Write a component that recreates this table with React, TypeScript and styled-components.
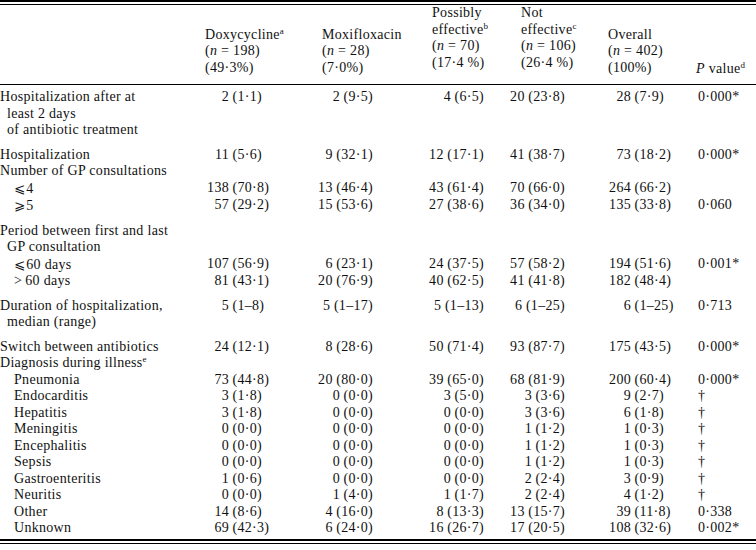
import React from 'react';
import styled, { createGlobalStyle } from 'styled-components';

const GlobalStyle = createGlobalStyle`
  body {
    margin: 0;
    background: #ffffff;
  }
`;

const COLS = '205px 117px 110px 89px 87px 88px 1fr';

type Align = { mode: 'paren' | 'right'; size: number };

// how each value column lines its figures up
const ALIGN: Align[] = [
  { mode: 'paren', size: 24 },
  { mode: 'right', size: 59 },
  { mode: 'right', size: 37 },
  { mode: 'right', size: 43 },
  { mode: 'paren', size: 23 },
];

const Table = styled.div`
  width: 756px;
  font-family: 'Liberation Serif', 'Times New Roman', serif;
  font-size: 14px;
  letter-spacing: 0.3px;
  color: #111;
`;

const Rule = styled.div<{ $h: number; $top?: number }>`
  height: ${({ $h }) => $h}px;
  margin-top: ${({ $top }) => $top ?? 0}px;
  background: #000;
`;

const HeadRow = styled.div`
  display: grid;
  grid-template-columns: ${COLS};
  align-items: end;
  height: 80px;
  border-bottom: 1px solid #000;
  box-sizing: border-box;
`;

const HeadCell = styled.div<{ $lift?: number }>`
  line-height: 16.5px;
  padding-bottom: ${({ $lift }) => $lift ?? 8}px;
`;

const Sup = styled.sup`
  font-size: 9px;
  line-height: 0;
  vertical-align: 5px;
  letter-spacing: 0;
`;

const Body = styled.div`
  padding: 4px 0 2px;
`;

const Row = styled.div<{ $gap?: boolean }>`
  display: grid;
  grid-template-columns: ${COLS};
  line-height: 16.5px;
  margin-top: ${({ $gap }) => ($gap ? '8px' : '0')};
`;

const Label = styled.div<{ $indent?: boolean }>`
  padding-left: ${({ $indent }) => ($indent ? '14px' : '0')};
  white-space: nowrap;
`;

const LabelLine = styled.div<{ $cont?: boolean }>`
  padding-left: ${({ $cont }) => ($cont ? '7px' : '0')};
`;

const Value = styled.div<{ $mode: 'paren' | 'right'; $size: number }>`
  display: flex;
  white-space: nowrap;
  justify-content: ${({ $mode }) => ($mode === 'right' ? 'flex-end' : 'flex-start')};
  padding-right: ${({ $mode, $size }) => ($mode === 'right' ? `${$size}px` : '0')};
`;

const Num = styled.span<{ $w?: number }>`
  display: inline-block;
  text-align: right;
  width: ${({ $w }) => ($w ? `${$w}px` : 'auto')};
`;

const Pct = styled.span`
  margin-left: 3.5px;
`;

const PCell = styled.div`
  padding-left: 2px;
  white-space: nowrap;
`;

const Sym = styled.span`
  font-family: 'DejaVu Serif', 'DejaVu Sans', serif;
  font-size: 13.5px;
  letter-spacing: 1px;
`;

type Line = {
  label: React.ReactNode[];
  indent?: boolean;
  gap?: boolean;
  values?: string[];
  p?: string;
};

const le = <Sym>⩽</Sym>;
const ge = <Sym>⩾</Sym>;

const rows: Line[] = [
  {
    label: ['Hospitalization after at', 'least 2 days', 'of antibiotic treatment'],
    values: ['2 (1·1)', '2 (9·5)', '4 (6·5)', '20 (23·8)', '28 (7·9)'],
    p: '0·000*',
  },
  {
    label: ['Hospitalization'],
    gap: true,
    values: ['11 (5·6)', '9 (32·1)', '12 (17·1)', '41 (38·7)', '73 (18·2)'],
    p: '0·000*',
  },
  { label: ['Number of GP consultations'] },
  {
    label: [<>{le}4</>],
    indent: true,
    values: ['138 (70·8)', '13 (46·4)', '43 (61·4)', '70 (66·0)', '264 (66·2)'],
  },
  {
    label: [<>{ge}5</>],
    indent: true,
    values: ['57 (29·2)', '15 (53·6)', '27 (38·6)', '36 (34·0)', '135 (33·8)'],
    p: '0·060',
  },
  { label: ['Period between first and last', 'GP consultation'], gap: true },
  {
    label: [<>{le}60 days</>],
    indent: true,
    values: ['107 (56·9)', '6 (23·1)', '24 (37·5)', '57 (58·2)', '194 (51·6)'],
    p: '0·001*',
  },
  {
    label: ['>\u200960 days'],
    indent: true,
    values: ['81 (43·1)', '20 (76·9)', '40 (62·5)', '41 (41·8)', '182 (48·4)'],
  },
  {
    label: ['Duration of hospitalization,', 'median (range)'],
    gap: true,
    values: ['5 (1–8)', '5 (1–17)', '5 (1–13)', '6 (1–25)', '6 (1–25)'],
    p: '0·713',
  },
  {
    label: ['Switch between antibiotics'],
    gap: true,
    values: ['24 (12·1)', '8 (28·6)', '50 (71·4)', '93 (87·7)', '175 (43·5)'],
    p: '0·000*',
  },
  { label: [<>Diagnosis during illness<Sup>e</Sup></>] },
  {
    label: ['Pneumonia'],
    indent: true,
    values: ['73 (44·8)', '20 (80·0)', '39 (65·0)', '68 (81·9)', '200 (60·4)'],
    p: '0·000*',
  },
  { label: ['Endocarditis'], indent: true, values: ['3 (1·8)', '0 (0·0)', '3 (5·0)', '3 (3·6)', '9 (2·7)'], p: '†' },
  { label: ['Hepatitis'], indent: true, values: ['3 (1·8)', '0 (0·0)', '0 (0·0)', '3 (3·6)', '6 (1·8)'], p: '†' },
  { label: ['Meningitis'], indent: true, values: ['0 (0·0)', '0 (0·0)', '0 (0·0)', '1 (1·2)', '1 (0·3)'], p: '†' },
  { label: ['Encephalitis'], indent: true, values: ['0 (0·0)', '0 (0·0)', '0 (0·0)', '1 (1·2)', '1 (0·3)'], p: '†' },
  { label: ['Sepsis'], indent: true, values: ['0 (0·0)', '0 (0·0)', '0 (0·0)', '1 (1·2)', '1 (0·3)'], p: '†' },
  { label: ['Gastroenteritis'], indent: true, values: ['1 (0·6)', '0 (0·0)', '0 (0·0)', '2 (2·4)', '3 (0·9)'], p: '†' },
  { label: ['Neuritis'], indent: true, values: ['0 (0·0)', '1 (4·0)', '1 (1·7)', '2 (2·4)', '4 (1·2)'], p: '†' },
  { label: ['Other'], indent: true, values: ['14 (8·6)', '4 (16·0)', '8 (13·3)', '13 (15·7)', '39 (11·8)'], p: '0·338' },
  { label: ['Unknown'], indent: true, values: ['69 (42·3)', '6 (24·0)', '16 (26·7)', '17 (20·5)', '108 (32·6)'], p: '0·002*' },
];

const Figure: React.FC<{ text: string; align: Align }> = ({ text, align }) => {
  const cut = text.indexOf(' ');
  const num = text.slice(0, cut);
  const rest = text.slice(cut + 1);
  return (
    <Value $mode={align.mode} $size={align.size}>
      <Num $w={align.mode === 'paren' ? align.size : undefined}>{num}</Num>
      <Pct>{rest}</Pct>
    </Value>
  );
};

const N: React.FC<{ v: string }> = ({ v }) => (
  <div>
    (<i>n</i> = {v})
  </div>
);

export default function App() {
  return (
    <>
      <GlobalStyle />
      <Table>
        <Rule $h={2} />
        <Rule $h={1} $top={2} />
        <HeadRow>
          <HeadCell />
          <HeadCell>
            <div>
              Doxycycline<Sup>a</Sup>
            </div>
            <N v="198" />
            <div>(49·3%)</div>
          </HeadCell>
          <HeadCell>
            <div>Moxifloxacin</div>
            <N v="28" />
            <div>(7·0%)</div>
          </HeadCell>
          <HeadCell $lift={13}>
            <div>Possibly</div>
            <div>
              effective<Sup>b</Sup>
            </div>
            <N v="70" />
            <div>(17·4 %)</div>
          </HeadCell>
          <HeadCell $lift={13}>
            <div>Not</div>
            <div>
              effective<Sup>c</Sup>
            </div>
            <N v="106" />
            <div>(26·4 %)</div>
          </HeadCell>
          <HeadCell>
            <div>Overall</div>
            <N v="402" />
            <div>(100%)</div>
          </HeadCell>
          <HeadCell $lift={7}>
            <i>P</i> value<Sup>d</Sup>
          </HeadCell>
        </HeadRow>
        <Body>
          {rows.map((row, i) => (
            <Row key={i} $gap={row.gap}>
              <Label $indent={row.indent}>
                {row.label.map((l, j) => (
                  <LabelLine key={j} $cont={j > 0}>
                    {l}
                  </LabelLine>
                ))}
              </Label>
              {ALIGN.map((a, k) =>
                row.values ? <Figure key={k} text={row.values[k]} align={a} /> : <div key={k} />
              )}
              <PCell>{row.p}</PCell>
            </Row>
          ))}
        </Body>
        <Rule $h={2} />
        <Rule $h={1} $top={2} />
      </Table>
    </>
  );
}
